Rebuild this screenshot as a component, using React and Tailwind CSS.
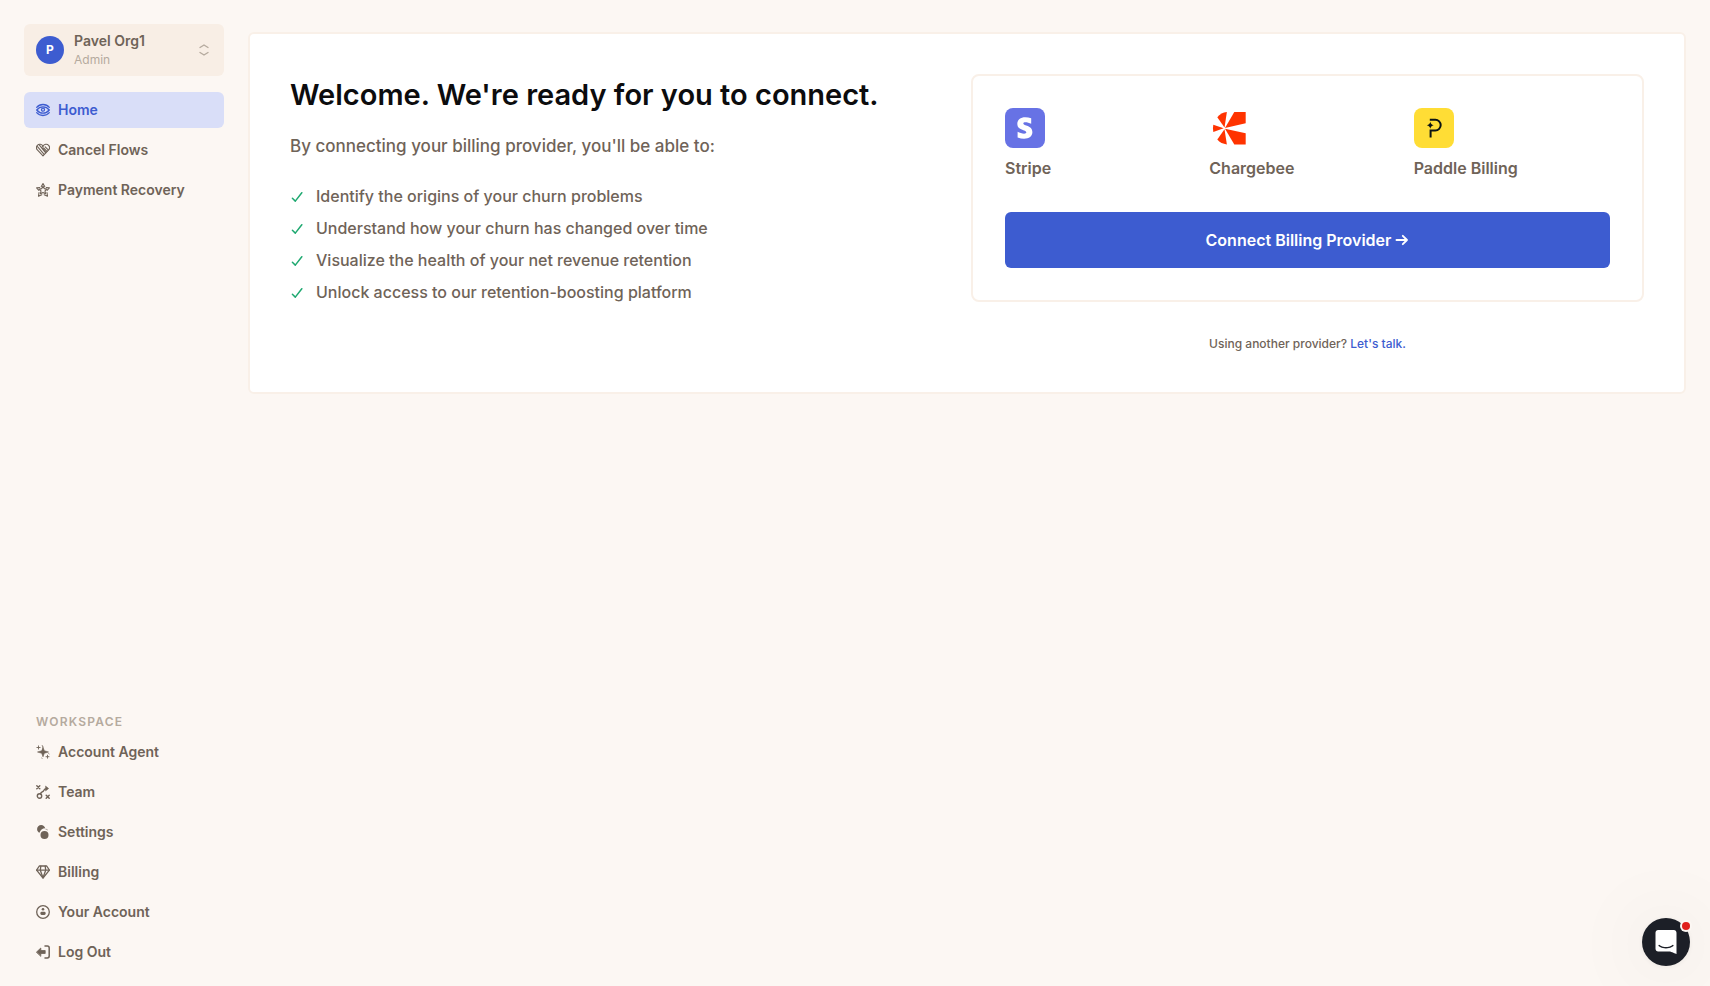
import React from "react";

const iconProps = {
  viewBox: "0 0 14 14",
  fill: "none",
  stroke: "currentColor",
  strokeLinecap: "round",
  strokeLinejoin: "round",
  "aria-hidden": true,
  className: "size-[14px] shrink-0",
};

function EyeIcon() {
  return (
    <svg {...iconProps} strokeWidth="1.3">
      <path d="M.7 4.300C2.300 2.400 4.500 1.500 7 1.500s4.700.9 6.300 2.800" />
      <path d="M.7 9.700c1.600 1.900 3.800 2.800 6.300 2.800s4.700-.9 6.300-2.800" />
      <path d="M.7 7C2.400 4.900 4.500 3.900 7 3.900S11.600 4.900 13.300 7C11.600 9.100 9.500 10.100 7 10.100S2.400 9.100.7 7Z" />
      <circle cx="7" cy="6.700" r="1.500" />
    </svg>
  );
}

function HeartIcon() {
  return (
    <svg {...iconProps} strokeWidth="1.1">
      <path d="M7 3.200C5.900 1 2.900.7 1.400 2.300.2 3.700.3 5.800 1.600 7.200L7 12.800l5.400-5.600c1.300-1.400 1.400-3.500.2-4.900C11.100.7 8.100 1 7 3.200Z" />
      <path d="m7 3.200-1.200 1.300 4 4.600M3.400 2.100l6.300 7.700M1.500 3.600l6.600 7.700M7.600 4.800l3.400 3.500M9.200 3.800l3 3.100" />
    </svg>
  );
}

function StarIcon() {
  return (
    <svg {...iconProps} strokeWidth="1.1">
      <path d="m7 3.100 1.200 2.500 2.700.4L9 7.900l.5 2.800L7 9.400l-2.500 1.300L5 7.900 3.100 6l2.700-.4Z" />
      <path d="M5.300 3.600 7 .6l1.700 3M10.200 4.500l3.200.4-2.300 2.400M11 9.600l.5 3.700L8.200 11.800M5.800 11.800l-3.300 1.500.5-3.700M2.900 7.300.6 4.900l3.200-.4" />
    </svg>
  );
}

function SparklesIcon() {
  return (
    <svg {...iconProps} strokeWidth=".9">
      <path fill="currentColor" strokeWidth=".6" d="M7 2.200 8.300 5.700 12.500 7 8.300 8.300 7 11.800 5.700 8.300 1.500 7l4.200-1.300Z" />
      <path d="M2.500.9v3.200M.9 2.500h3.200M11.500 10.200v3M10 11.700h3M6.300.6l.5 1M12.800 8.600l.4.400M5.800 13.200l.4.300" />
    </svg>
  );
}

function StrategyIcon() {
  return (
    <svg {...iconProps} strokeWidth="1.400">
      <path d="m.8.800 3 3M3.800.8l-3 3M10.200 10.200l3 3M13.200 10.200l-3 3" />
      <circle cx="3.500" cy="11" r="2.200" />
      <path d="M4.500 9c.4-2.500 2.200-1.800 3-3.200.7-1.500 1.500-2.300 3.500-2.300" />
      <path fill="currentColor" strokeWidth=".6" d="m9.800 1.300 2.800 2.200-2.800 2.200Z" />
    </svg>
  );
}

function SettingsIcon() {
  return (
    <svg {...iconProps} fill="currentColor" stroke="none">
      <path d="M1.100 4.200A4.100 4.100 0 0 1 5.200 0c2 0 3.600 1.400 4 3.200-2.700 0-5 1.800-5.700 4.500C2 7.100 1.100 5.800 1.100 4.200Z" />
      <circle cx="8.500" cy="10" r="4" />
      <path d="M9.900 4.200c.6.100 1 .3 1.500.6" fill="none" stroke="currentColor" strokeWidth=".6" />
    </svg>
  );
}

function DiamondIcon() {
  return (
    <svg {...iconProps} strokeWidth="1.300">
      <path d="M3.300 1h7.400l2.700 4.200L7 13 .6 5.200Z" />
      <path d="M.8 5.200h12.400M4.800 1.200 4.300 5.200 7 12.800l2.700-7.600-.5-4" />
    </svg>
  );
}

function AccountIcon() {
  return (
    <svg {...iconProps} strokeWidth="1.300">
      <circle cx="7" cy="7" r="6.300" />
      <circle cx="7" cy="4.300" r="1.300" fill="currentColor" stroke="none" />
      <path fill="currentColor" stroke="none" d="M4.300 8.200c0-1 .8-1.400 2.700-1.400s2.700.4 2.700 1.400c0 1.300-.8 1.900-2.700 1.900s-2.700-.6-2.700-1.900Z" />
    </svg>
  );
}

function LogOutIcon() {
  return (
    <svg {...iconProps} strokeWidth="1.500">
      <path d="M9 1h2.300c1.200 0 1.900.7 1.900 1.900v8.200c0 1.200-.7 1.900-1.900 1.900H9" />
      <path fill="currentColor" strokeWidth=".8" d="M.6 7 4.800 3v2.500h4.400v3H4.800V11Z" />
    </svg>
  );
}

function CheckIcon() {
  return (
    <svg viewBox="0 0 14 14" fill="none" stroke="#1fa971" strokeWidth="1.500" strokeLinecap="round" strokeLinejoin="round" aria-hidden="true" className="size-[14px] shrink-0">
      <path d="m2.400 9.200 2.900 2.900 6.500-8.400" />
    </svg>
  );
}

function StripeLogo() {
  return (
    <svg viewBox="0 0 40 40" aria-hidden="true" className="size-10">
      <rect width="40" height="40" rx="8" fill="#6772e5" />
      <path
        fill="#fff"
        d="M18.300 15.600c0-.9.800-1.300 2-1.300 1.800 0 4.100.6 5.900 1.500V10.300c-2-.8-3.900-1.100-5.900-1.100-4.800 0-8 2.500-8 6.700 0 6.600 9 5.500 9 8.400 0 1.100-.9 1.400-2.200 1.400-2 0-4.500-.8-6.500-1.900v5.600c2.200.9 4.400 1.400 6.500 1.400 4.900 0 8.300-2.400 8.300-6.700 0-7.100-9.100-5.800-9.100-8.500Z"
      />
    </svg>
  );
}

function ChargebeeLogo() {
  return (
    <svg viewBox="0 0 40 40" fill="#ff3300" aria-hidden="true" className="size-10">
      <path d="M25.300 4h11.400v11.200L16 20Z" />
      <path d="M36.700 25.300v11.200H25.300L16 20.800Z" />
      <path d="M8.300 9.200C10.700 6.200 14 4.400 17.900 4L15.500 19.400Z" />
      <path d="M8.300 31.600c2.400 2.900 5.700 4.500 9.600 4.900l-2.400-15.200Z" />
      <path d="M4.300 16.700 14.700 20.300 4.300 23.900c-.5-2.400-.5-4.800 0-7.200Z" />
    </svg>
  );
}

function PaddleLogo() {
  return (
    <svg viewBox="0 0 40 40" aria-hidden="true" className="size-10">
      <rect width="40" height="40" rx="8" fill="#ffdd35" />
      <path d="M15.800 11.800h5.600a5.300 5.300 0 0 1 0 10.600h-4.800v7" fill="none" stroke="#0c1414" strokeWidth="2" />
      <path d="M16.300 13.800c.4 2.100 1.300 3 3.400 3.500-2.100.5-3 1.400-3.400 3.500-.4-2.100-1.300-3-3.500-3.500 2.200-.5 3.100-1.400 3.500-3.500Z" fill="#0c1414" />
    </svg>
  );
}

const mainLinks = [
  { label: "Home", Icon: EyeIcon, active: true },
  { label: "Cancel Flows", Icon: HeartIcon },
  { label: "Payment Recovery", Icon: StarIcon },
];

const workspaceLinks = [
  { label: "Account Agent", Icon: SparklesIcon },
  { label: "Team", Icon: StrategyIcon },
  { label: "Settings", Icon: SettingsIcon },
  { label: "Billing", Icon: DiamondIcon },
  { label: "Your Account", Icon: AccountIcon },
  { label: "Log Out", Icon: LogOutIcon },
];

const benefits = [
  "Identify the origins of your churn problems",
  "Understand how your churn has changed over time",
  "Visualize the health of your net revenue retention",
  "Unlock access to our retention-boosting platform",
];

const providers = [
  { name: "Stripe", Logo: StripeLogo },
  { name: "Chargebee", Logo: ChargebeeLogo },
  { name: "Paddle Billing", Logo: PaddleLogo },
];

function NavList({ items }) {
  return (
    <ul className="flex flex-col gap-1">
      {items.map(({ label, Icon, active }) => (
        <li key={label}>
          <a
            href="#"
            aria-current={active ? "page" : undefined}
            className={
              active
                ? "flex h-9 items-center gap-2 rounded-md bg-[#d9def8] px-3 text-sm font-semibold text-[#3d5cd0]"
                : "flex h-9 items-center gap-2 rounded-md px-3 text-sm font-semibold text-[#6f6358]"
            }
          >
            <Icon />
            {label}
          </a>
        </li>
      ))}
    </ul>
  );
}

function Sidebar() {
  return (
    <aside className="flex w-[200px] shrink-0 flex-col justify-between pt-6 pb-4">
      <div className="flex flex-col gap-4">
        <button type="button" className="flex h-[52px] items-center rounded-md bg-[#f8eee5] px-3 text-left">
          <span className="flex size-7 items-center justify-center rounded-full bg-[#3d5cd0] text-xs font-bold text-white">P</span>
          <span className="ml-[10px] flex flex-1 flex-col">
            <span className="text-sm font-semibold text-[#6f6358]">Pavel Org1</span>
            <span className="text-xs leading-[18px] text-[#b5aa9e]">Admin</span>
          </span>
          <svg viewBox="0 0 16 16" fill="none" stroke="#b5aa9e" strokeWidth="1.400" strokeLinecap="round" strokeLinejoin="round" aria-hidden="true" className="size-4">
            <path d="M4 5.500 8 3l4 2.500M4 10.500 8 13l4-2.500" />
          </svg>
        </button>
        <nav aria-label="Main">
          <NavList items={mainLinks} />
        </nav>
      </div>
      <nav aria-label="Workspace">
        <h2 className="mb-1 px-3 text-xs leading-4 font-semibold tracking-widest text-[#b5aa9e]">WORKSPACE</h2>
        <NavList items={workspaceLinks} />
      </nav>
    </aside>
  );
}

export default function App() {
  return (
    <div className="flex min-h-screen gap-6 bg-[#fcf7f3] px-6 font-[Inter,'Liberation_Sans',sans-serif] text-[#6f6358]">
      <Sidebar />
      <main className="min-w-0 flex-1 pt-8">
        <section className="grid grid-cols-2 gap-2 rounded-md border-2 border-[#f9f0e8] bg-white p-10">
          <div>
            <h1 className="text-[29px] leading-[42px] font-semibold text-[#0c0c0e]">Welcome. We're ready for you to connect.</h1>
            <p className="mt-4 text-[17px] leading-7 font-medium">By connecting your billing provider, you'll be able to:</p>
            <ul className="mt-6 flex flex-col gap-2">
              {benefits.map((benefit) => (
                <li key={benefit} className="flex items-center gap-3 text-base font-medium">
                  <CheckIcon />
                  {benefit}
                </li>
              ))}
            </ul>
          </div>
          <div>
            <div className="rounded-lg border-2 border-[#f9f0e8] p-8">
              <ul className="grid grid-cols-3 gap-2">
                {providers.map(({ name, Logo }) => (
                  <li key={name} className="flex flex-col gap-2 text-base font-semibold">
                    <Logo />
                    {name}
                  </li>
                ))}
              </ul>
              <button type="button" className="mt-8 flex h-14 w-full items-center justify-center gap-1 rounded-md bg-[#3d5cd0] text-base font-semibold text-white">
                Connect Billing Provider
                <svg viewBox="0 0 14 14" fill="none" stroke="currentColor" strokeWidth="1.900" strokeLinecap="round" strokeLinejoin="round" aria-hidden="true" className="size-[14px]">
                  <path d="M1.500 7h10.500M7.800 2.800 12 7l-4.200 4.200" />
                </svg>
              </button>
            </div>
            <p className="mt-[34px] text-center text-xs font-medium">
              Using another provider?{" "}
              <a href="#" className="text-[#3d5cd0]">Let's talk.</a>
            </p>
          </div>
        </section>
      </main>
      <button
        type="button"
        aria-label="Open chat"
        className="fixed right-5 bottom-5 flex size-12 items-center justify-center rounded-full bg-[#1c1f27] shadow-[0_1px_6px_rgba(0,0,0,0.06),0_2px_80px_rgba(0,0,0,0.1)]"
      >
        <svg viewBox="0 0 28 32" fill="#fff" aria-hidden="true" className="h-6 w-[22px]">
          <path d="M28 32s-4.714-1.855-8.527-3.340H3.437C1.540 28.660 0 27.026 0 25.013V3.644C0 1.633 1.540 0 3.437 0h21.125c1.898 0 3.437 1.632 3.437 3.645v18.404H28V32zm-4.139-11.982a.88.88 0 00-1.292-.105c-.03.026-3.015 2.681-8.570 2.681-5.486 0-8.517-2.636-8.571-2.684a.88.88 0 00-1.290.107 1.010 1.010 0 00-.219.708.992.992 0 00.318.664c.142.128 3.537 3.150 9.762 3.150 6.226 0 9.621-3.022 9.763-3.150a.992.992 0 00.317-.664 1.010 1.010 0 00-.218-.707z" />
        </svg>
        <span className="absolute top-1 right-0 size-2 rounded-full bg-[#e0201c] ring-2 ring-[#fcf7f3]" />
      </button>
    </div>
  );
}
